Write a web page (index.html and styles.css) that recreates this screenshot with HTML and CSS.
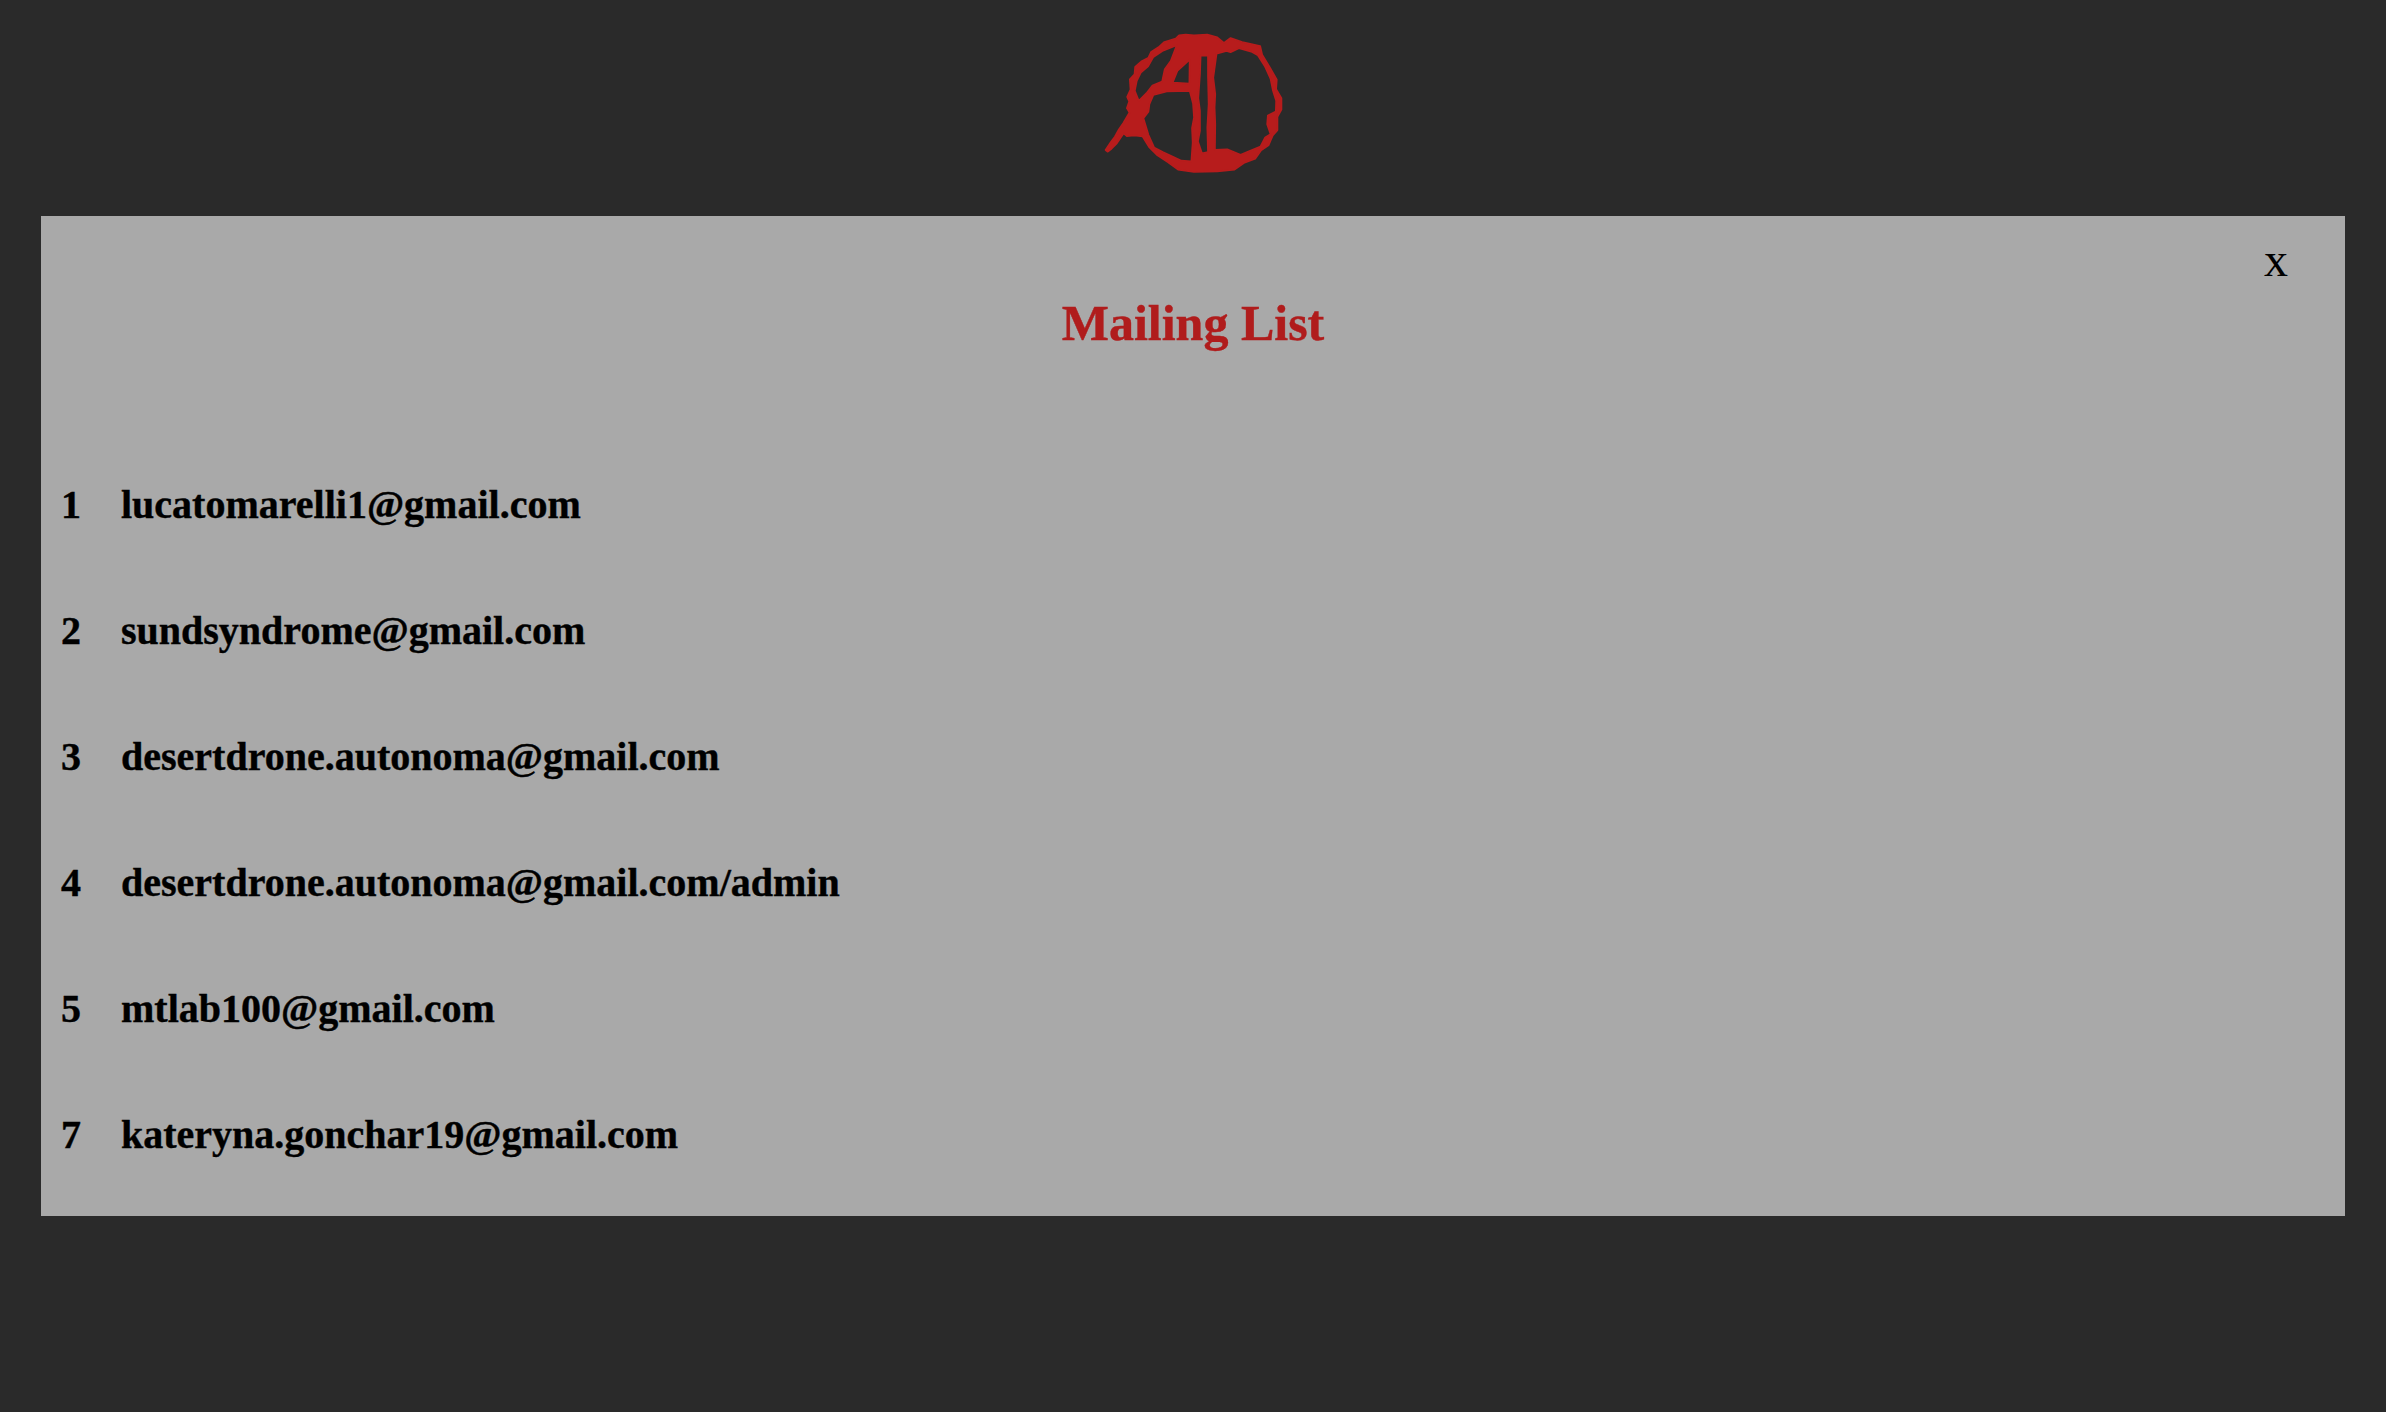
FILE: index.html
```html
<!DOCTYPE html>
<html lang="en">
<head>
<meta charset="utf-8">
<title>Mailing List</title>
<link rel="stylesheet" href="styles.css">
</head>
<body>
<header class="top">
<svg class="logo" viewBox="130 66 537 421" aria-label="AD logo">
<path fill-rule="evenodd" d="M134 418L150 394L162 378L174 356L188 336L206 305L198 292L205 272L199 258L209 236L207 205L221 190L223 168L241 152L263 140L271 123L293 109L311 93L345 83L355 73L375 71L400 73L440 71L470 79L490 96L510 81L545 93L599 105L605 131L629 171L649 206L647 235L663 262L663 296L651 318L651 358L637 374L624 404L602 419L584 444L550 457L522 477L470 482L400 484L352 477L322 455L290 434L265 409L245 377L220 374L198 376L188 368L168 398L152 414L140 423Z
M234 270L222 240L228 210L240 185L262 166L278 138L305 120L348 103L330 150L312 175L304 212L275 224L257 247Z
M387 146L386 218L336 215L350 180Z
M278 252L318 242L387 240L397 278L400 320L394 352L396 395L392 452L362 450L340 440L306 424L280 410L263 372L248 322L263 303L266 280Z
M420 134L442 134L442 195L444 280L440 350L442 424L424 428L412 392L418 360L418 300L413 262L418 190Z
M468 128L498 120L510 124L535 112L572 122L592 133L614 168L630 203L637 238L647 270L646 302L622 314L620 340L630 370L614 380L600 407L576 417L540 432L500 416L463 417L464 340L462 290L464 250L458 200Z"/>
</svg>
</header>
<main class="panel">
<div class="close">x</div>
<h1 class="title">Mailing List</h1>
<ol class="list">
<li class="row"><span class="num">1</span><span>lucatomarelli1@gmail.com</span></li>
<li class="row"><span class="num">2</span><span>sundsyndrome@gmail.com</span></li>
<li class="row"><span class="num">3</span><span>desertdrone.autonoma@gmail.com</span></li>
<li class="row"><span class="num">4</span><span>desertdrone.autonoma@gmail.com/admin</span></li>
<li class="row"><span class="num">5</span><span>mtlab100@gmail.com</span></li>
<li class="row"><span class="num">7</span><span>kateryna.gonchar19@gmail.com</span></li>
</ol>
</main>
</body>
</html>
```
FILE: styles.css
```css
html, body { margin: 0; padding: 0; }
body {
  min-height: 1412px;
  background: #2a2a2a;
  font-family: "Liberation Serif", "Times New Roman", serif;
  color: #000;
}
.top {
  display: flex;
  justify-content: center;
  padding: 33px 0 43px;
}
.logo {
  width: 179px;
  height: 140px;
  display: block;
  fill: #b71c1c;
  stroke: #b71c1c;
  stroke-width: 5;
  stroke-linejoin: round;
}
.panel {
  position: relative;
  margin: 0 41px;
  height: 1000px;
  box-sizing: border-box;
  background: #a9a9a9;
  padding: 78px 20px 0;
}
.close {
  position: absolute;
  top: 16px;
  right: 57px;
  font-size: 48px;
  line-height: 55px;
}
.title {
  margin: 0;
  text-align: center;
  color: #b01c1c;
  font-size: 50px;
  line-height: 58px;
  font-weight: bold;
  -webkit-text-stroke: 0.4px #b01c1c;
}
.list {
  list-style: none;
  margin: 132px 0 0;
  padding: 0;
  display: flex;
  flex-direction: column;
  gap: 84px;
}
.row {
  display: flex;
  font-size: 40px;
  line-height: 42px;
  font-weight: bold;
  -webkit-text-stroke: 0.4px #000;
}
.num { width: 60px; }
```
